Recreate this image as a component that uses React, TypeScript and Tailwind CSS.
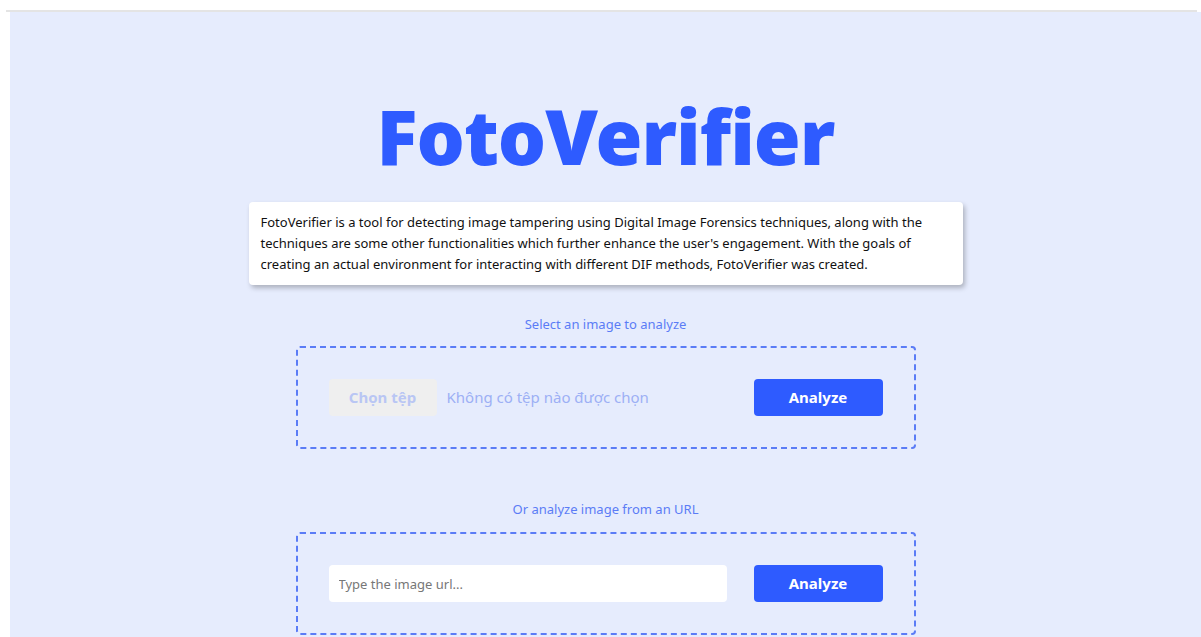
import React from "react";

const font = { fontFamily: '"Noto Sans", "Open Sans", Arial, sans-serif' };

function Label({ children }: { children: React.ReactNode }) {
  return (
    <p className="text-center text-[13px] leading-[18px] text-[#5b7cf6]">{children}</p>
  );
}

function AnalyzeButton() {
  return (
    <button className="h-[37px] w-[129px] shrink-0 rounded-[4px] bg-[#2e5bff] text-[15px] font-bold text-white">
      Analyze
    </button>
  );
}

export default function App() {
  return (
    <div className="min-h-[637px] w-full bg-white pl-[10px] pt-[10px]" style={font}>
      <div className="h-[2px] w-full -ml-[4px] bg-[#e4e4e4]" />
      <main className="flex min-h-[625px] flex-col items-center bg-[#e6ecfd] pb-2">
        <h1 className="mt-[74px] text-[76px] font-black leading-[100px] tracking-[-1px] text-[#2e5bff]">
          FotoVerifier
        </h1>
        <div className="mt-[16px] w-[714px] rounded-[4px] bg-white px-[12px] py-[10px] text-[13px] leading-[21px] text-[#111] shadow-[2px_3px_5px_rgba(0,0,0,0.25)]">
          FotoVerifier is a tool for detecting image tampering using Digital Image Forensics techniques,
          along with the techniques are some other functionalities which further enhance the user's
          engagement. With the goals of creating an actual environment for interacting with different DIF
          methods, FotoVerifier was created.
        </div>

        <div className="mt-[30px]">
          <Label>Select an image to analyze</Label>
        </div>
        <section className="mt-[13px] flex h-[103px] w-[620px] items-center justify-between rounded-[4px] border-2 border-dashed border-[#5b7cf6] px-[31px]">
          <div className="flex items-center gap-[10px]">
            <span className="flex h-[37px] w-[108px] items-center justify-center rounded-[4px] bg-[#efefef] text-[15px] font-bold text-[#b9c6f4]">
              Chọn tệp
            </span>
            <span className="text-[15px] text-[#9db0f5]">Không có tệp nào được chọn</span>
          </div>
          <AnalyzeButton />
        </section>

        <div className="mt-[51px]">
          <Label>Or analyze image from an URL</Label>
        </div>
        <section className="mt-[14px] flex h-[103px] w-[620px] items-center justify-between rounded-[4px] border-2 border-dashed border-[#5b7cf6] px-[31px]">
          <input
            type="text"
            placeholder="Type the image url..."
            className="h-[37px] w-[398px] rounded-[4px] bg-white px-[10px] text-[13px] text-[#333] outline-none placeholder:text-[#777]"
          />
          <AnalyzeButton />
        </section>
      </main>
    </div>
  );
}
